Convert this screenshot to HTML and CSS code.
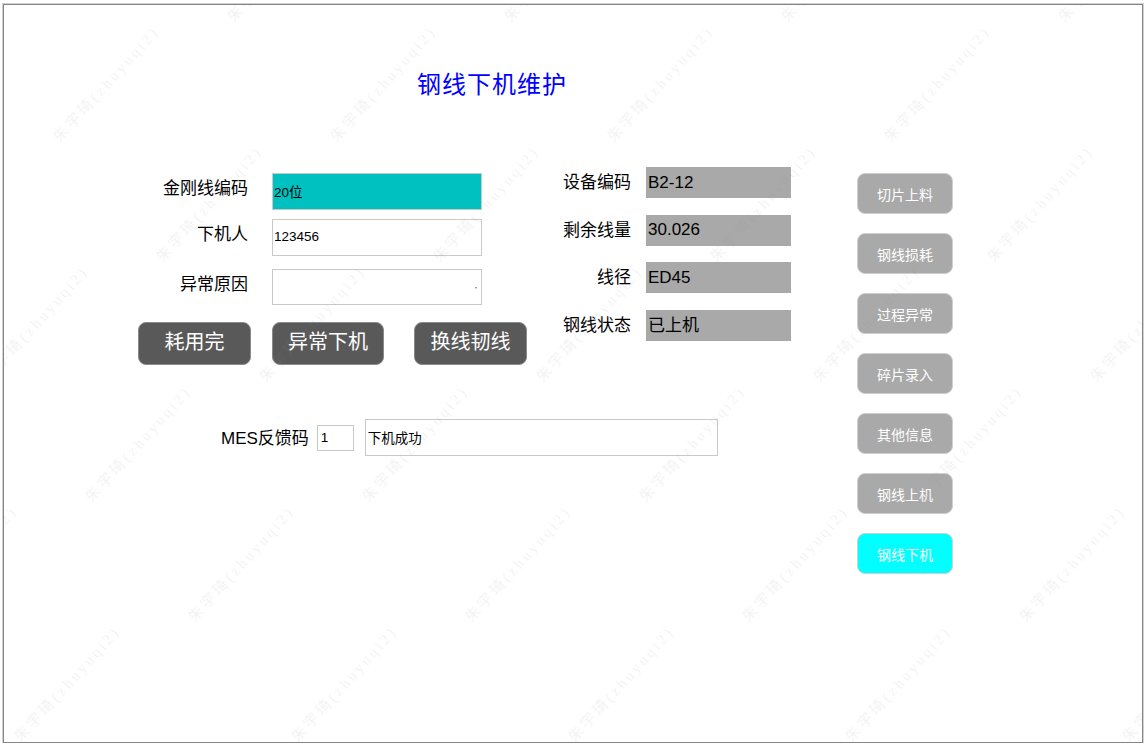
FILE: index.html
```html
<!DOCTYPE html>
<html lang="zh-CN">
<head>
<meta charset="utf-8">
<title>钢线下机维护</title>
<link rel="stylesheet" href="styles.css">
</head>
<body>
<div class="frame">
  <h1 class="title">钢线下机维护</h1>
  <div class="main">
    <div class="content">
      <div class="top-row">
        <div class="form">
          <div class="form-row">
            <span class="form-label">金刚线编码</span>
            <div class="field field--teal">20位</div>
          </div>
          <div class="form-row form-row--2">
            <span class="form-label">下机人</span>
            <div class="field">123456</div>
          </div>
          <div class="form-row form-row--3">
            <span class="form-label">异常原因</span>
            <div class="field field--select"><span class="caret"></span></div>
          </div>
          <div class="actions">
            <button class="action">耗用完</button>
            <button class="action action--mid">异常下机</button>
            <button class="action">换线韧线</button>
          </div>
        </div>
        <div class="info">
          <div class="info-row"><span class="info-label">设备编码</span><span class="info-value">B2-12</span></div>
          <div class="info-row"><span class="info-label">剩余线量</span><span class="info-value">30.026</span></div>
          <div class="info-row"><span class="info-label">线径</span><span class="info-value">ED45</span></div>
          <div class="info-row"><span class="info-label">钢线状态</span><span class="info-value info-value--cjk">已上机</span></div>
        </div>
      </div>
      <div class="mes-row">
        <span class="mes-label">MES反馈码</span>
        <div class="mes-code">1</div>
        <div class="mes-msg">下机成功</div>
      </div>
    </div>
    <nav class="side-nav">
      <button class="nav-btn">切片上料</button>
      <button class="nav-btn">钢线损耗</button>
      <button class="nav-btn">过程异常</button>
      <button class="nav-btn">碎片录入</button>
      <button class="nav-btn">其他信息</button>
      <button class="nav-btn">钢线上机</button>
      <button class="nav-btn nav-btn--active">钢线下机</button>
    </nav>
  </div>
  <svg class="watermark" aria-hidden="true">
    <defs>
      <text id="wmt" class="wm-text" transform="skewX(-40.64) rotate(-48)">朱宇琦(zhuyuqi2)</text>
      <pattern id="wm" patternUnits="userSpaceOnUse" width="277" height="120" patternTransform="skewX(40.64)">
        <use href="#wmt" x="214.6" y="18"/>
        <use href="#wmt" x="214.6" y="138"/>
        <use href="#wmt" x="214.6" y="258"/>
        <use href="#wmt" x="-62.4" y="18"/>
        <use href="#wmt" x="-62.4" y="138"/>
        <use href="#wmt" x="-62.4" y="258"/>
      </pattern>
    </defs>
    <rect class="wm-fill" width="100%" height="100%" fill="url(#wm)"/>
  </svg>
</div>
</body>
</html>
```

FILE: styles.css
```css
body {
  margin: 0;
  background: #fff;
  color: #000;
  font-family: "Liberation Sans", "Noto Sans CJK SC", sans-serif;
}

.frame {
  position: relative;
  box-sizing: border-box;
  width: 1140px;
  height: 739px;
  margin: 4px 0 0 3px;
  border: 1px solid #858585;
  box-shadow: 0 0 0 1px #d2d2d2;
  overflow: hidden;
  background: #fff;
}

.title {
  margin: 0;
  padding: 65px 0 0 413px;
  font-size: 24px;
  letter-spacing: 1px;
  line-height: 30px;
  font-weight: normal;
  color: #0000ff;
}

.main {
  display: flex;
  align-items: flex-start;
  margin-top: 67px;
  padding-left: 134px;
}

.content {
  width: 652px;
}

.top-row {
  display: flex;
  align-items: flex-start;
}

.form {
  width: 389px;
  margin-top: 6px;
}

.form-row {
  display: flex;
  align-items: center;
}

.form-row--2 {
  margin-top: 9px;
}

.form-row--3 {
  margin-top: 13px;
}

.form-label {
  width: 110px;
  margin-right: 24px;
  padding-bottom: 5px;
  text-align: right;
  font-size: 17px;
  line-height: 20px;
}

.field {
  box-sizing: border-box;
  width: 210px;
  height: 37px;
  border: 1px solid #c9c9c9;
  background: #fff;
  padding-left: 1px;
  padding-bottom: 2px;
  display: flex;
  align-items: center;
  font-size: 13.5px;
}

.field--teal {
  background: #00c0c0;
}

.field--select {
  height: 36px;
  justify-content: flex-end;
  padding-right: 4px;
  padding-bottom: 0;
}

.caret {
  width: 0;
  height: 0;
  margin-top: 2px;
  border-left: 1.5px solid transparent;
  border-right: 1.5px solid transparent;
  border-top: 2px solid #808080;
}

.actions {
  display: flex;
  margin-top: 17px;
}

.action {
  box-sizing: border-box;
  width: 113px;
  height: 43px;
  margin: 0 21px 0 0;
  padding: 0 0 6px;
  border: 1px solid #8a8a8a;
  border-radius: 8px;
  background: #595959;
  color: #fff;
  font-family: inherit;
  font-size: 20px;
}

.action--mid {
  width: 112px;
  margin-right: 30px;
}

.action:last-child {
  margin-right: 0;
}

.info {
  display: flex;
  flex-direction: column;
  gap: 16.5px;
  margin-left: 13px;
}

.info-row {
  display: flex;
  align-items: center;
}

.info-label {
  width: 91px;
  margin-right: 15px;
  padding-bottom: 4px;
  text-align: right;
  font-size: 17px;
}

.info-value {
  box-sizing: border-box;
  width: 145px;
  height: 31px;
  padding-left: 2px;
  background: #a9a9a9;
  display: flex;
  align-items: center;
  font-size: 17px;
}

.info-value--cjk {
  padding-bottom: 4px;
}

.mes-row {
  display: flex;
  align-items: center;
  margin-top: 54px;
  padding-left: 83px;
}

.mes-label {
  font-size: 17px;
  padding-bottom: 2px;
}

.mes-code {
  box-sizing: border-box;
  width: 37px;
  height: 26px;
  margin-left: 8px;
  padding-left: 3px;
  border: 1px solid #c9c9c9;
  display: flex;
  align-items: center;
  font-size: 13.5px;
}

.mes-msg {
  box-sizing: border-box;
  width: 353px;
  height: 37px;
  margin-left: 11px;
  padding-left: 2px;
  padding-bottom: 2px;
  border: 1px solid #c9c9c9;
  display: flex;
  align-items: center;
  font-size: 13.5px;
}

.side-nav {
  display: flex;
  flex-direction: column;
  gap: 19px;
  margin-left: 67px;
  margin-top: 6px;
}

.nav-btn {
  box-sizing: border-box;
  width: 96px;
  height: 41px;
  padding: 0;
  border: 1px solid #cfcfcf;
  border-radius: 8px;
  background: #a9a9a9;
  color: #fff;
  font-family: inherit;
  font-size: 14px;
}

.nav-btn--active {
  background: #00ffff;
}

.watermark {
  position: absolute;
  inset: 0;
  width: 100%;
  height: 100%;
  pointer-events: none;
}

.wm-text {
  font-family: "Liberation Serif", "Noto Sans CJK SC", serif;
  font-size: 15px;
  letter-spacing: 3px;
  fill: #8c8c8c;
  fill-opacity: 0.11;
}
```
